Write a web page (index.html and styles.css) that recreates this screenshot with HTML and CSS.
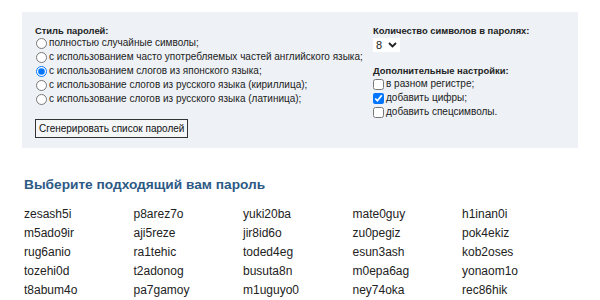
FILE: index.html
```html
<!DOCTYPE html>
<html lang="ru">
<head>
<meta charset="utf-8">
<title>Генератор паролей</title>
<link rel="stylesheet" href="styles.css">
</head>
<body>
<form class="panel">
  <div class="col-left">
    <div class="label">Стиль паролей:</div>
    <label class="opt"><input type="radio" name="style">полностью случайные символы;</label>
    <label class="opt"><input type="radio" name="style">с использованием часто употребляемых частей английского языка;</label>
    <label class="opt"><input type="radio" name="style" checked>с использованием слогов из японского языка;</label>
    <label class="opt"><input type="radio" name="style">с использование слогов из русского языка (кириллица);</label>
    <label class="opt"><input type="radio" name="style">с использование слогов из русского языка (латиница);</label>
    <button type="button" class="btn">Сгенерировать список паролей</button>
  </div>
  <div class="col-right">
    <div class="label">Количество символов в паролях:</div>
    <div class="select"><span>8</span><svg width="9" height="6" viewBox="0 0 9 6"><path d="M1 1 L4.5 4.5 L8 1" fill="none" stroke="#222" stroke-width="1.8"/></svg></div>
    <div class="label label-gap">Дополнительные настройки:</div>
    <label class="opt"><input type="checkbox">в разном регистре;</label>
    <label class="opt"><input type="checkbox" checked>добавить цифры;</label>
    <label class="opt"><input type="checkbox">добавить спецсимволы.</label>
  </div>
</form>
<section class="result">
  <h2 class="title">Выберите подходящий вам пароль</h2>
  <div class="grid">
    <span>zesash5i</span><span>p8arez7o</span><span>yuki20ba</span><span>mate0guy</span><span>h1inan0i</span>
    <span>m5ado9ir</span><span>aji5reze</span><span>jir8id6o</span><span>zu0pegiz</span><span>pok4ekiz</span>
    <span>rug6anio</span><span>ra1tehic</span><span>toded4eg</span><span>esun3ash</span><span>kob2oses</span>
    <span>tozehi0d</span><span>t2adonog</span><span>busuta8n</span><span>m0epa6ag</span><span>yonaom1o</span>
    <span>t8abum4o</span><span>pa7gamoy</span><span>m1uguyo0</span><span>ney74oka</span><span>rec86hik</span>
  </div>
</section>
</body>
</html>
```

FILE: styles.css
```css
html, body {
  margin: 0;
  padding: 0;
  background: #fff;
}
body {
  font-family: "Liberation Sans", Arial, sans-serif;
  color: #222;
}
.panel {
  margin: 12px 22px 0 22px;
  height: 136px;
  box-sizing: border-box;
  padding: 13px 13px 10px 13px;
  background: #eef2f6;
  display: grid;
  grid-template-columns: 338px 1fr;
}
.col-left, .col-right {
  display: flex;
  flex-direction: column;
  align-items: flex-start;
}
.label {
  font-size: 9.4px;
  font-weight: bold;
  line-height: 12px;
  height: 12px;
  color: #222;
}
.label-gap {
  margin-top: 13px;
}
.opt {
  display: flex;
  align-items: center;
  font-size: 10px;
  line-height: 14px;
  height: 14px;
  color: #222;
  white-space: nowrap;
}
.opt input {
  width: 11px;
  height: 11px;
  margin: 0 2px 0 1px;
}
.col-left .opt:first-of-type {
  margin-top: -1px;
}
.btn {
  margin-top: 13px;
  height: 19px;
  padding: 0 3px;
  font-family: "Liberation Sans", Arial, sans-serif;
  font-size: 10px;
  color: #111;
  background: #f4f6f8;
  border: 1px solid #333;
  border-radius: 0;
}
.select {
  margin-top: 1px;
  height: 14px;
  width: 27px;
  background: #fff;
  display: flex;
  align-items: center;
  gap: 6px;
  padding-left: 3px;
  box-sizing: border-box;
  font-size: 11px;
}
.col-right .opt {
  margin-left: -1px;
}
.result {
  margin: 28px 0 0 24px;
}
.title {
  margin: 0;
  font-size: 13.7px;
  line-height: 18px;
  font-weight: bold;
  color: #2d5a85;
}
.grid {
  margin-top: 11px;
  display: grid;
  grid-template-columns: repeat(5, 109.5px);
  font-size: 12px;
  line-height: 19px;
  color: #222;
}
```
